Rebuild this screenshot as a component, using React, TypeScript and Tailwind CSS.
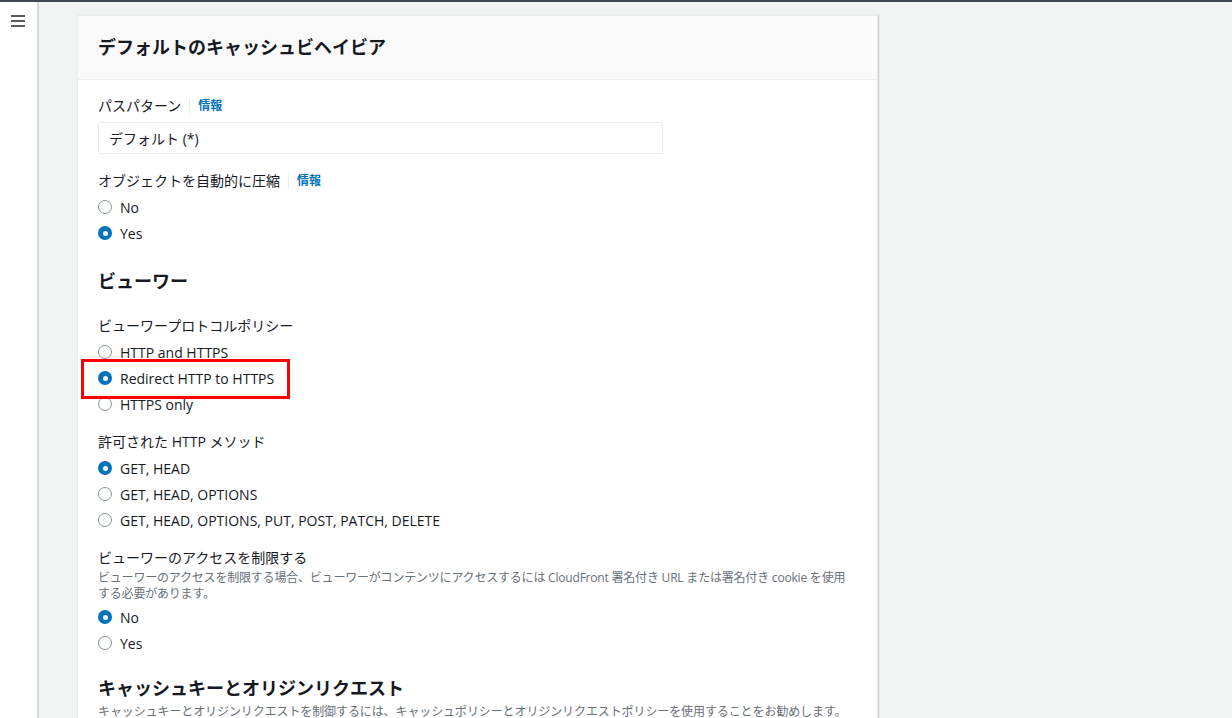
import type { ReactNode } from "react";

const font = {
  fontFamily: '"Open Sans", "Noto Sans CJK JP", sans-serif',
};

function Radio({ checked, children }: { checked?: boolean; children: ReactNode }) {
  return (
    <label className="flex h-[26px] items-center gap-[8px] text-[14px] text-[#16191f]">
      {checked ? (
        <span className="flex h-[14px] w-[14px] items-center justify-center rounded-full bg-[#0073bb]">
          <span className="h-[5px] w-[5px] rounded-full bg-white" />
        </span>
      ) : (
        <span className="h-[14px] w-[14px] rounded-full border-[1.5px] border-[#879596] bg-white" />
      )}
      <span>{children}</span>
    </label>
  );
}

function Label({ children, info }: { children: ReactNode; info?: boolean }) {
  return (
    <div className="flex items-center text-[14px] leading-[22px] text-[#16191f]">
      <span>{children}</span>
      {info && (
        <>
          <span className="mx-[8px] h-[16px] w-px bg-[#eaeded]" />
          <span className="text-[12px] font-bold text-[#0073bb]">情報</span>
        </>
      )}
    </div>
  );
}

export default function App() {
  return (
    <div style={font} className="flex h-[718px] w-[1232px] flex-col overflow-hidden bg-[#f2f3f3]">
      <div className="h-[2px] shrink-0 bg-[#414750]" />
      <div className="flex min-h-0 flex-1">
        {/* Sidebar */}
        <div className="w-[39px] shrink-0 border-r-2 border-[#d5dbdb] bg-white pt-[13px]">
          <div className="ml-[11px] flex w-[14px] flex-col gap-[3px]">
            <span className="h-[2px] bg-[#545b64]" />
            <span className="h-[2px] bg-[#545b64]" />
            <span className="h-[2px] bg-[#545b64]" />
          </div>
        </div>

        {/* Main */}
        <div className="flex-1 pl-[38px] pt-[13px]">
          <div className="w-[801px] border border-[#eaeded] bg-white shadow-[1px_0_1px_rgba(0,0,0,0.15)]">
            <div className="flex h-[64px] items-center border-b border-[#eaeded] bg-[#fafafa] px-[20px]">
              <h2 className="text-[18px] font-bold text-[#16191f]">デフォルトのキャッシュビヘイビア</h2>
            </div>

            <div className="px-[20px] pt-[15px]">
              <Label info>パスパターン</Label>
              <div className="mt-[5px] flex h-[32px] w-[565px] items-center rounded-[2px] border border-[#eaeded] px-[10px] text-[14px] text-[#16191f]">
                デフォルト (*)
              </div>

              <div className="mt-[16px]">
                <Label info>オブジェクトを自動的に圧縮</Label>
                <div className="mt-[2px]">
                  <Radio>No</Radio>
                  <Radio checked>Yes</Radio>
                </div>
              </div>

              <h3 className="mt-[22px] text-[18px] font-bold text-[#16191f]">ビューワー</h3>

              <div className="mt-[20px]">
                <Label>ビューワープロトコルポリシー</Label>
                <div className="relative mt-[2px]">
                  <Radio>HTTP and HTTPS</Radio>
                  <Radio checked>Redirect HTTP to HTTPS</Radio>
                  <Radio>HTTPS only</Radio>
                  <div className="pointer-events-none absolute left-[-17px] top-[20px] h-[40px] w-[209px] border-[3px] border-[#ff0000]" />
                </div>
              </div>

              <div className="mt-[14px]">
                <Label>許可された HTTP メソッド</Label>
                <div className="mt-[2px]">
                  <Radio checked>GET, HEAD</Radio>
                  <Radio>GET, HEAD, OPTIONS</Radio>
                  <Radio>GET, HEAD, OPTIONS, PUT, POST, PATCH, DELETE</Radio>
                </div>
              </div>

              <div className="mt-[14px]">
                <Label>ビューワーのアクセスを制限する</Label>
                <p className="mt-[1px] text-[12px] leading-[16px] tracking-[-0.2px] text-[#687078]">
                  <span className="block whitespace-nowrap">
                    ビューワーのアクセスを制限する場合、ビューワーがコンテンツにアクセスするには CloudFront 署名付き URL または署名付き cookie を使用
                  </span>
                  <span className="block">する必要があります。</span>
                </p>
                <div className="mt-[2px]">
                  <Radio checked>No</Radio>
                  <Radio>Yes</Radio>
                </div>
              </div>

              <h3 className="mt-[19px] text-[18px] font-bold text-[#16191f]">キャッシュキーとオリジンリクエスト</h3>
              <p className="mt-[2px] whitespace-nowrap text-[12px] leading-[16px] tracking-[-0.1px] text-[#687078]">
                キャッシュキーとオリジンリクエストを制御するには、キャッシュポリシーとオリジンリクエストポリシーを使用することをお勧めします。
              </p>
              <div className="h-[200px]" />
            </div>
          </div>
        </div>
      </div>
    </div>
  );
}
